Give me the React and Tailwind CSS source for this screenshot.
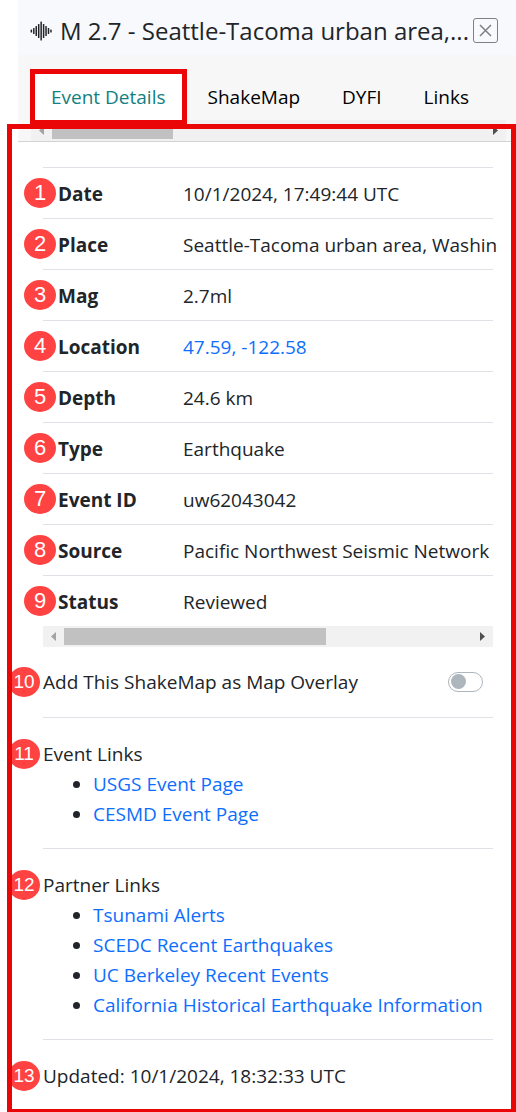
import React, { useState } from 'react';

const details = [
  { label: 'Date', value: '10/1/2024, 17:49:44 UTC' },
  { label: 'Place', value: 'Seattle-Tacoma urban area, Washin' },
  { label: 'Mag', value: '2.7ml' },
  { label: 'Location', value: '47.59, -122.58', link: true },
  { label: 'Depth', value: '24.6 km' },
  { label: 'Type', value: 'Earthquake' },
  { label: 'Event ID', value: 'uw62043042' },
  { label: 'Source', value: 'Pacific Northwest Seismic Network' },
  { label: 'Status', value: 'Reviewed' }
];

const eventLinks = ['USGS Event Page', 'CESMD Event Page'];

const partnerLinks = [
  'Tsunami Alerts',
  'SCEDC Recent Earthquakes',
  'UC Berkeley Recent Events',
  'California Historical Earthquake Information'
];

const tabs = ['Event Details', 'ShakeMap', 'DYFI', 'Links'];

const SeismicIcon = () => {
  const bars = [3, 6, 10, 14, 19, 14, 10, 6, 3];
  return (
    <svg width="22" height="20" viewBox="0 0 22 20" className="shrink-0" aria-hidden="true">
      {bars.map((h, i) => (
        <rect key={i} x={0.6 + i * 2.45} y={10 - h / 2} width="1.5" height={h} rx="0.5" fill="#212529" />
      ))}
    </svg>
  );
};

const Badge = ({ n, outer }) => (
  <span
    className={`absolute top-1/2 -translate-y-1/2 flex h-[30px] w-8 items-center justify-center rounded-[50%] bg-[#ff4242] font-['Liberation_Sans',sans-serif] font-normal text-white ${
      outer ? '-left-[35px] text-[19px]' : '-left-[19px] text-[22px]'
    }`}
  >
    {n}
  </span>
);

const ScrollBar = ({ thumb }) => (
  <div className="flex h-[21px] items-center bg-[#f1f1f1]">
    <svg width="21" height="21" viewBox="0 0 21 21" className="shrink-0" aria-hidden="true">
      <path d="M13 6v9l-5-4.5z" fill="#a3a3a3" />
    </svg>
    <div className="flex-1">
      <div className={`h-[17px] bg-[#c1c1c1] ${thumb}`}></div>
    </div>
    <svg width="21" height="21" viewBox="0 0 21 21" className="shrink-0" aria-hidden="true">
      <path d="M8 6v9l5-4.5z" fill="#505050" />
    </svg>
  </div>
);

const LinkGroup = ({ n, title, links }) => (
  <div className="border-b border-[#dee2e6] pt-[21px] pb-[19px]">
    <h2 className="relative">
      <Badge n={n} outer />
      {title}
    </h2>
    <ul className="list-disc pl-[50px]">
      {links.map((link) => (
        <li key={link}>
          <a href="#" className="whitespace-nowrap text-[#0d6efd]">{link}</a>
        </li>
      ))}
    </ul>
  </div>
);

const App = () => {
  const [active, setActive] = useState('Event Details');
  const [overlay, setOverlay] = useState(false);

  return (
    <div className="bg-white font-['Open_Sans','Noto_Sans',sans-serif] text-[19px] leading-[30px] text-[#212529]">
      {/* Title bar */}
      <header className="ml-[18px] flex h-[55px] items-center bg-[#f8f9fc] pt-1.5 pr-[18px] pl-3">
        <SeismicIcon />
        <h1 className="ml-2 min-w-0 flex-1 whitespace-nowrap text-2xl">M 2.7 - Seattle-Tacoma urban area,...</h1>
        <button
          type="button"
          aria-label="Close"
          className="flex h-[25px] w-[25px] shrink-0 items-center justify-center rounded-[3px] border border-[#808080]"
        >
          <svg width="13" height="13" viewBox="0 0 13 13" aria-hidden="true">
            <path d="M1 1l11 11M12 1L1 12" stroke="#808080" strokeWidth="1.5" fill="none" />
          </svg>
        </button>
      </header>

      {/* Tabs */}
      <nav className="ml-[18px] flex bg-[#f7f7f7] pt-[19px] pl-3 text-black">
        {tabs.map((tab) => (
          <button
            key={tab}
            type="button"
            onClick={() => setActive(tab)}
            className={`h-[46px] whitespace-nowrap ${
              tab === active
                ? 'relative z-10 mx-[5px] bg-white px-4 text-[#128080] outline-[5px] outline-[#ea0606]'
                : 'px-[21px]'
            }`}
          >
            {tab}
          </button>
        ))}
      </nav>

      <main className="relative">
        <div className="ml-[18px] border-b border-[#d3d3d3] bg-[#f7f7f7] pr-[10px] pl-[13px]">
          <ScrollBar thumb="w-[121px]" />
        </div>

        <div className="mr-[23px] ml-[43px] pt-[25px]">
          <table className="w-full table-fixed text-left">
            <tbody>
              {details.map((row, i) => (
                <tr key={row.label} className="h-[51px] border-t border-[#dee2e6] last:h-[50px]">
                  <th className="relative w-[140px] pt-0.5 pl-[15px] font-bold">
                    <Badge n={i + 1} />
                    {row.label}
                  </th>
                  <td className="pt-0.5 whitespace-nowrap">
                    {row.link ? <a href="#" className="text-[#0d6efd]">{row.value}</a> : row.value}
                  </td>
                </tr>
              ))}
            </tbody>
          </table>
          <ScrollBar thumb="w-[262px]" />

          {/* Overlay toggle */}
          <div className="flex items-center justify-between border-b border-[#dee2e6] py-5">
            <label htmlFor="overlay" className="relative">
              <Badge n={10} outer />
              Add This ShakeMap as Map Overlay
            </label>
            <input
              id="overlay"
              type="checkbox"
              role="switch"
              checked={overlay}
              onChange={(e) => setOverlay(e.target.checked)}
              className="mr-2.5 flex h-5 w-[35px] appearance-none items-center rounded-full border border-[#adb5bd] bg-white px-0.5 before:h-[15px] before:w-[15px] before:rounded-full before:bg-[#adb5bd] before:content-[''] checked:justify-end"
            />
          </div>

          <LinkGroup n={11} title="Event Links" links={eventLinks} />
          <LinkGroup n={12} title="Partner Links" links={partnerLinks} />

          <div className="py-[21px]">
            <p className="relative">
              <Badge n={13} outer />
              Updated: 10/1/2024, 18:32:33 UTC
            </p>
          </div>
        </div>

        {/* Callout frame around the details panel */}
        <div className="pointer-events-none absolute top-1 right-0 bottom-0 left-[7px] border-[5px] border-b-[3px] border-[#ea0606]"></div>
      </main>
    </div>
  );
};

export default App;
